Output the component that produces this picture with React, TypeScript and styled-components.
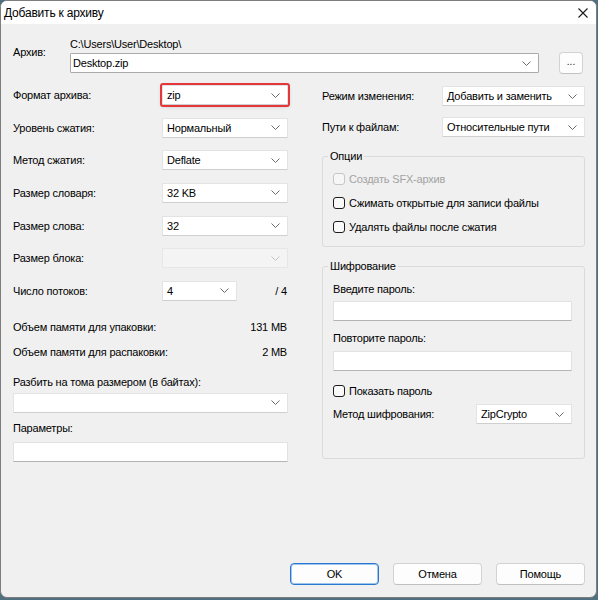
import styled, { createGlobalStyle, css } from 'styled-components'

const GlobalStyle = createGlobalStyle`
	html, body {
		margin: 0;
		padding: 0;
		background: #51707f;
	}
	body {
		font-family: 'Liberation Sans', Arial, sans-serif;
		font-size: 11px;
		letter-spacing: -0.2px;
		color: #000;
	}
	* {
		box-sizing: border-box;
	}
`

function Chevron({ muted }: { muted?: boolean }) {
	return (
		<ChevronSvg width="9" height="5" viewBox="0 0 9 5">
			<path
				d="M0.5 0.5 L4.5 4.5 L8.5 0.5"
				fill="none"
				stroke={muted ? '#c4c4c4' : '#6a6a6a'}
				strokeWidth="1"
			/>
		</ChevronSvg>
	)
}

function Select({
	value,
	width,
	disabled,
	highlight,
	editable,
}: {
	value?: string
	width?: number
	disabled?: boolean
	highlight?: boolean
	editable?: boolean
}) {
	return (
		<Combo
			$width={width}
			$disabled={disabled}
			$highlight={highlight}
			$editable={editable}
		>
			<span>{value}</span>
			<Chevron muted={disabled} />
		</Combo>
	)
}

function Check({ label, disabled }: { label: string; disabled?: boolean }) {
	return (
		<CheckRow $disabled={disabled}>
			<CheckBox $disabled={disabled} />
			<span>{label}</span>
		</CheckRow>
	)
}

function App() {
	return (
		<>
			<GlobalStyle />
			<Window>
				<TitleBar>
					<Title>Добавить к архиву</Title>
					<svg width="10" height="10" viewBox="0 0 10 10">
						<path
							d="M0.5 0.5 L9.5 9.5 M9.5 0.5 L0.5 9.5"
							stroke="#1a1a1a"
							strokeWidth="1.1"
						/>
					</svg>
				</TitleBar>
				<Body>
					<ArchiveRow>
						<ArchiveLabel>Архив:</ArchiveLabel>
						<ArchiveFields>
							<PathText>C:\Users\User\Desktop\</PathText>
							<ArchiveInputRow>
								<Select value="Desktop.zip" editable />
								<BrowseButton>...</BrowseButton>
							</ArchiveInputRow>
						</ArchiveFields>
					</ArchiveRow>

					<Columns>
						<LeftColumn>
							<SettingsGrid>
								<Label>Формат архива:</Label>
								<Select value="zip" highlight />
								<Label>Уровень сжатия:</Label>
								<Select value="Нормальный" />
								<Label>Метод сжатия:</Label>
								<Select value="Deflate" />
								<Label>Размер словаря:</Label>
								<Select value="32 KB" />
								<Label>Размер слова:</Label>
								<Select value="32" />
								<Label>Размер блока:</Label>
								<Select disabled />
								<Label>Число потоков:</Label>
								<ThreadCell>
									<Select value="4" width={75} />
									<span>/ 4</span>
								</ThreadCell>
							</SettingsGrid>

							<MemoryList>
								<MemoryRow>
									<span>Объем памяти для упаковки:</span>
									<span>131 MB</span>
								</MemoryRow>
								<MemoryRow>
									<span>Объем памяти для распаковки:</span>
									<span>2 MB</span>
								</MemoryRow>
							</MemoryList>

							<FieldLabel $top={16}>Разбить на тома размером (в байтах):</FieldLabel>
							<Spaced $top={4}>
								<Select />
							</Spaced>
							<FieldLabel $top={8}>Параметры:</FieldLabel>
							<TextBox $top={7} />
						</LeftColumn>

						<RightColumn>
							<ModeGrid>
								<Label>Режим изменения:</Label>
								<Select value="Добавить и заменить" />
								<Label>Пути к файлам:</Label>
								<Select value="Относительные пути" />
							</ModeGrid>

							<Group $top={12}>
								<Legend>Опции</Legend>
								<OptionList>
									<Check label="Создать SFX-архив" disabled />
									<Check label="Сжимать открытые для записи файлы" />
									<Check label="Удалять файлы после сжатия" />
								</OptionList>
							</Group>

							<Group $top={12} $bottom={34}>
								<Legend>Шифрование</Legend>
								<FieldLabel $top={0}>Введите пароль:</FieldLabel>
								<TextBox $top={5} />
								<FieldLabel $top={10}>Повторите пароль:</FieldLabel>
								<TextBox $top={6} />
								<Spaced $top={13}>
									<Check label="Показать пароль" />
								</Spaced>
								<EncryptRow>
									<span>Метод шифрования:</span>
									<Select value="ZipCrypto" width={96} />
								</EncryptRow>
							</Group>
						</RightColumn>
					</Columns>

					<ButtonBar>
						<DialogButton $primary>OK</DialogButton>
						<DialogButton>Отмена</DialogButton>
						<DialogButton>Помощь</DialogButton>
					</ButtonBar>
				</Body>
			</Window>
		</>
	)
}

export default App

const Window = styled.div`
	width: 597px;
	height: 598px;
	background: #f0f0f0;
	border: 1px solid #7d7d7d;
	border-radius: 7px;
	overflow: hidden;
	display: flex;
	flex-direction: column;
`

const TitleBar = styled.div`
	height: 23px;
	background: #fff;
	display: flex;
	align-items: center;
	justify-content: space-between;
	padding: 0 8px 0 3px;
	flex-shrink: 0;
`

const Title = styled.div`
	font-size: 12px;
`

const Body = styled.div`
	flex: 1;
	display: flex;
	flex-direction: column;
	padding: 0 11px 12px 12px;
`

const ArchiveRow = styled.div`
	display: flex;
	margin-top: 13px;
`

const ArchiveLabel = styled.div`
	width: 57px;
	margin-top: 8px;
	line-height: 14px;
`

const ArchiveFields = styled.div`
	flex: 1;
	display: flex;
	flex-direction: column;
	gap: 1px;
`

const PathText = styled.div`
	line-height: 14px;
`

const ArchiveInputRow = styled.div`
	display: flex;
	align-items: center;
`

const BrowseButton = styled.button`
	width: 24px;
	height: 22px;
	margin: 0 2px 0 20px;
	padding: 0 0 4px;
	background: #fdfdfd;
	border: 1px solid #d3d3d3;
	border-bottom-color: #c2c2c2;
	border-radius: 4px;
	font-family: inherit;
	font-size: 10px;
	color: #222;
	flex-shrink: 0;
`

const ChevronSvg = styled.svg`
	flex-shrink: 0;
`

const Combo = styled.div<{
	$width?: number
	$disabled?: boolean
	$highlight?: boolean
	$editable?: boolean
}>`
	height: 20px;
	width: ${(p) => (p.$width ? `${p.$width}px` : '100%')};
	flex: ${(p) => (p.$editable ? '1' : 'none')};
	display: flex;
	align-items: center;
	justify-content: space-between;
	padding: 0 7px 0 4px;
	background: #fff;
	border: 1px solid #e3e3e3;
	border-bottom-color: #cfcfcf;
	border-radius: 1px;
	white-space: nowrap;

	${(p) =>
		p.$editable &&
		css`
			border-color: #ababab;
			padding-left: 2px;
		`}

	${(p) =>
		p.$disabled &&
		css`
			background: #f4f4f4;
			border-color: #e6e6e6;
		`}

	${(p) =>
		p.$highlight &&
		css`
			outline: 2px solid #e5373a;
			box-shadow: 0 1px 4px rgba(0, 0, 0, 0.25);
		`}
`

const Columns = styled.div`
	display: grid;
	grid-template-columns: 275px 1fr;
	column-gap: 34px;
	margin-top: 11px;
`

const LeftColumn = styled.div`
	display: flex;
	flex-direction: column;
`

const RightColumn = styled.div`
	display: flex;
	flex-direction: column;
`

const SettingsGrid = styled.div`
	display: grid;
	grid-template-columns: 149px 1fr;
	grid-auto-rows: 20px;
	row-gap: 12.67px;
	align-items: center;
`

const Label = styled.span`
	white-space: nowrap;
`

const ThreadCell = styled.div`
	display: flex;
	align-items: center;
	justify-content: space-between;
	padding-right: 1px;
`

const MemoryList = styled.div`
	display: flex;
	flex-direction: column;
	gap: 11px;
	margin-top: 19px;
	padding-right: 1px;
`

const MemoryRow = styled.div`
	display: flex;
	justify-content: space-between;
	line-height: 14px;
`

const FieldLabel = styled.div<{ $top: number }>`
	line-height: 14px;
	margin-top: ${(p) => p.$top}px;
`

const Spaced = styled.div<{ $top: number }>`
	margin-top: ${(p) => p.$top}px;
`

const TextBox = styled.div<{ $top: number }>`
	height: 20px;
	margin-top: ${(p) => p.$top}px;
	background: #fff;
	border: 1px solid #e2e2e2;
	border-bottom-color: #b4b4b4;
	border-radius: 1px;
`

const ModeGrid = styled.div`
	display: grid;
	grid-template-columns: 120px 1fr;
	grid-auto-rows: 20px;
	row-gap: 11px;
	align-items: center;
	margin-top: 1px;
`

const Group = styled.fieldset<{ $top: number; $bottom?: number }>`
	margin: ${(p) => p.$top}px 0 0;
	padding: 9px 12px ${(p) => p.$bottom ?? 12}px 10px;
	border: 1px solid #dadada;
	border-radius: 3px;
	min-inline-size: 0;
	display: flex;
	flex-direction: column;
`

const Legend = styled.legend`
	padding: 0 2px;
	margin-left: -5px;
	line-height: 14px;
`

const OptionList = styled.div`
	display: flex;
	flex-direction: column;
	gap: 10px;
`

const CheckRow = styled.label<{ $disabled?: boolean }>`
	display: flex;
	align-items: center;
	gap: 4px;
	line-height: 14px;
	color: ${(p) => (p.$disabled ? '#a3a3a3' : '#000')};
`

const CheckBox = styled.span<{ $disabled?: boolean }>`
	width: 12px;
	height: 12px;
	border-radius: 3px;
	border: 1px solid ${(p) => (p.$disabled ? '#c6c6c6' : '#1c1c1c')};
	background: ${(p) => (p.$disabled ? '#f6f6f6' : '#f9f9f9')};
	flex-shrink: 0;
`

const EncryptRow = styled.div`
	display: flex;
	align-items: center;
	justify-content: space-between;
	margin-top: 6px;
`

const ButtonBar = styled.div`
	margin-top: auto;
	display: flex;
	justify-content: flex-end;
	gap: 14px;
`

const DialogButton = styled.button<{ $primary?: boolean }>`
	width: 89px;
	height: 22px;
	padding: 0;
	background: #fdfdfd;
	border: 1px solid #d2d2d2;
	border-bottom-color: #c0c0c0;
	border-radius: 4px;
	font-family: inherit;
	font-size: 11px;
	letter-spacing: -0.2px;
	color: #000;

	${(p) =>
		p.$primary &&
		css`
			border: 1px solid #2a77d2;
			box-shadow: inset 0 0 0 1px #9fc4ee;
		`}
`
